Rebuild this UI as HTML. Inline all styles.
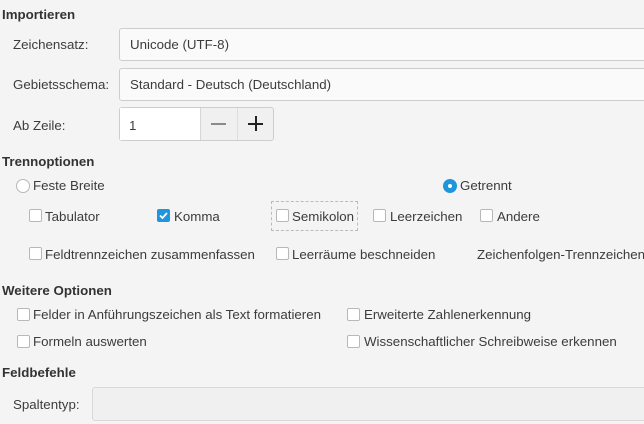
<!DOCTYPE html><html><head><style>
body{margin:0;width:644px;height:424px;background:#f4f4f4;font-family:"Liberation Sans",sans-serif;font-size:13.3px;color:#3c3c3c;position:relative;overflow:hidden}
.a{position:absolute;white-space:nowrap;line-height:16px;margin-top:1px}
b.a{font-weight:bold;color:#333}
.box{position:absolute;background:#fafafa;border:1px solid #cdcdcd;border-radius:3px;box-sizing:border-box}
.cb{position:absolute;width:13px;height:13px;background:#fff;border:1px solid #b8b8b8;border-radius:2px;box-sizing:border-box}
.rd{position:absolute;width:14px;height:14px;background:#fff;border:1px solid #b8b8b8;border-radius:50%;box-sizing:border-box}
</style></head><body>
<b class="a" style="left:2px;top:6px">Importieren</b>
<div class="a" style="left:13px;top:36px">Zeichensatz:</div>
<div class="box" style="left:119px;top:28px;width:540px;height:33px"></div>
<div class="a" style="left:130px;top:36px">Unicode (UTF-8)</div>
<div class="a" style="left:13px;top:76px">Gebietsschema:</div>
<div class="box" style="left:119px;top:68px;width:540px;height:33px"></div>
<div class="a" style="left:130px;top:76px">Standard - Deutsch (Deutschland)</div>
<div class="a" style="left:13px;top:117px">Ab Zeile:</div>
<div class="box" style="left:119px;top:107px;width:155px;height:34px;background:#f0f0f0"></div>
<div style="position:absolute;left:120px;top:108px;width:80px;height:32px;background:#fff;border-right:1px solid #d6d6d6"></div>
<div style="position:absolute;left:237px;top:108px;width:1px;height:32px;background:#ddd"></div>
<div style="position:absolute;left:211px;top:123px;width:15px;height:1.5px;background:#8a8a8a"></div>
<div style="position:absolute;left:248px;top:123px;width:15px;height:1.5px;background:#222"></div>
<div style="position:absolute;left:255px;top:116px;width:1.5px;height:15px;background:#222"></div>
<div class="a" style="left:129px;top:117px">1</div>
<b class="a" style="left:2px;top:153px">Trennoptionen</b>
<div class="rd" style="left:16px;top:179px"></div>
<div class="a" style="left:33px;top:177px">Feste Breite</div>
<div class="rd" style="left:443px;top:179px;background:#1f95dc;border-color:#1f95dc"></div>
<div style="position:absolute;left:448px;top:184px;width:4px;height:4px;border-radius:50%;background:#fff"></div>
<div class="a" style="left:460px;top:177px">Getrennt</div>
<div class="cb" style="left:29px;top:209px"></div><div class="a" style="left:45px;top:208px">Tabulator</div>
<div class="cb" style="left:157px;top:209px;background:#1f95dc;border-color:#1f95dc"></div>
<svg style="position:absolute;left:157px;top:209px" width="13" height="13"><path d="M3 6.5l2.5 2.5 4.5-5" stroke="#fff" stroke-width="1.8" fill="none"/></svg>
<div class="a" style="left:174px;top:208px">Komma</div>
<div style="position:absolute;left:271px;top:201px;width:87px;height:30px;border:1px dashed #bbb;box-sizing:border-box"></div>
<div class="cb" style="left:276px;top:209px"></div><div class="a" style="left:292px;top:208px">Semikolon</div>
<div class="cb" style="left:373px;top:209px"></div><div class="a" style="left:390px;top:208px">Leerzeichen</div>
<div class="cb" style="left:480px;top:209px"></div><div class="a" style="left:497px;top:208px">Andere</div>
<div class="cb" style="left:29px;top:247px"></div><div class="a" style="left:45px;top:246px">Feldtrennzeichen zusammenfassen</div>
<div class="cb" style="left:276px;top:247px"></div><div class="a" style="left:292px;top:246px">Leerräume beschneiden</div>
<div class="a" style="left:477px;top:246px">Zeichenfolgen-Trennzeichen</div>
<b class="a" style="left:2px;top:282px">Weitere Optionen</b>
<div class="cb" style="left:17px;top:308px"></div><div class="a" style="left:33px;top:306px">Felder in Anführungszeichen als Text formatieren</div>
<div class="cb" style="left:347px;top:308px"></div><div class="a" style="left:364px;top:306px">Erweiterte Zahlenerkennung</div>
<div class="cb" style="left:17px;top:335px"></div><div class="a" style="left:33px;top:333px">Formeln auswerten</div>
<div class="cb" style="left:347px;top:335px"></div><div class="a" style="left:364px;top:333px">Wissenschaftlicher Schreibweise erkennen</div>
<b class="a" style="left:2px;top:364px">Feldbefehle</b>
<div class="a" style="left:13px;top:396px">Spaltentyp:</div>
<div class="box" style="left:92px;top:387px;width:570px;height:34px;background:#f0f0f0;border-color:#d8d8d8"></div>
</body></html>
